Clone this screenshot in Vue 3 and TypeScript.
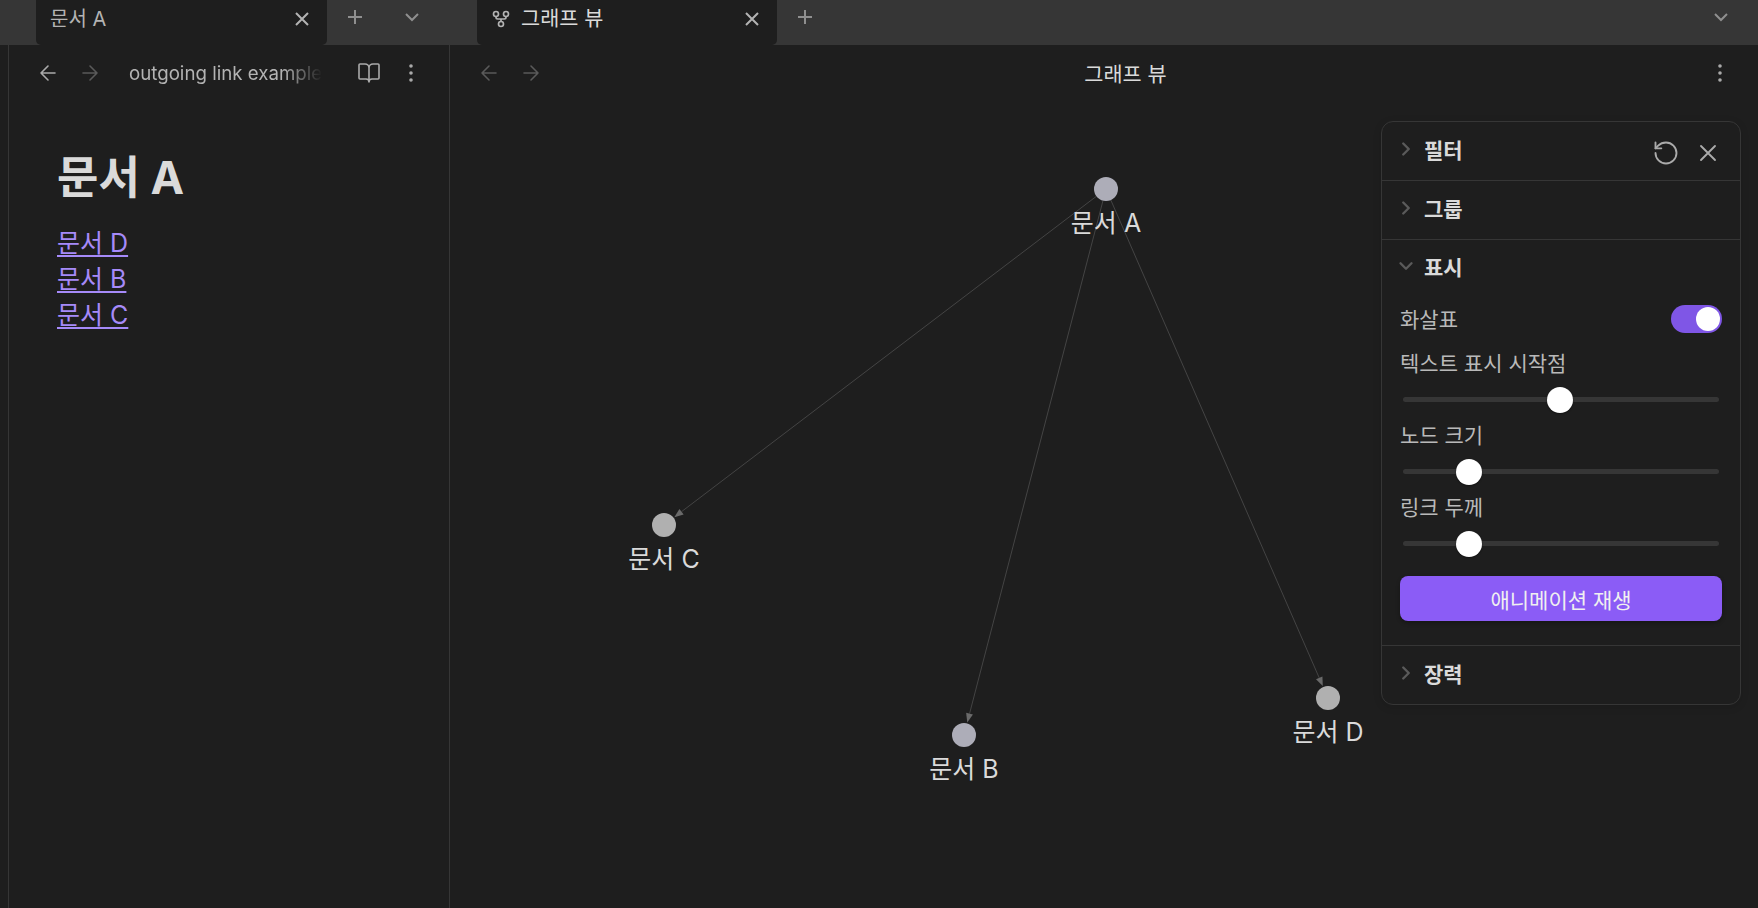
<script setup lang="ts">
interface GraphNode {
  name: string;
  x: number;
  y: number;
  fill: string;
}

// graph canvas coordinates, relative to the right pane body
const originX = 450;
const originY = 45;

const nodes: GraphNode[] = [
  { name: "문서 A", x: 1106 - originX, y: 189 - originY, fill: "#adadb8" },
  { name: "문서 C", x: 664 - originX, y: 525 - originY, fill: "#b0b0b0" },
  { name: "문서 B", x: 964 - originX, y: 735 - originY, fill: "#adadb8" },
  { name: "문서 D", x: 1328 - originX, y: 698 - originY, fill: "#b0b0b0" },
];

function edgeLine(to: GraphNode) {
  const from = nodes[0];
  const dx = to.x - from.x;
  const dy = to.y - from.y;
  const len = Math.hypot(dx, dy);
  const ux = dx / len;
  const uy = dy / len;
  const endX = to.x - ux * 13;
  const endY = to.y - uy * 13;
  const backX = endX - ux * 9;
  const backY = endY - uy * 9;
  const nx = -uy * 3.5;
  const ny = ux * 3.5;
  return {
    x1: from.x + ux * 12,
    y1: from.y + uy * 12,
    x2: backX,
    y2: backY,
    head: `${endX},${endY} ${backX + nx},${backY + ny} ${backX - nx},${backY - ny}`,
  };
}

const edges = nodes.slice(1).map(edgeLine);

const sliders = [
  { label: "텍스트 표시 시작점", value: 144 },
  { label: "노드 크기", value: 53 },
  { label: "링크 두께", value: 53 },
];
</script>

<template>
  <div class="app">
    <section class="split left">
      <div class="tabbar">
        <div class="tab first">
          <span class="tab-title">문서 A</span>
          <svg class="tab-close" viewBox="0 0 24 24"><path d="M18 6 6 18M6 6l12 12" /></svg>
        </div>
        <svg class="bar-icon plus" viewBox="0 0 24 24"><path d="M5 12h14M12 5v14" /></svg>
        <svg class="bar-icon chev" viewBox="0 0 24 24"><path d="m6 9 6 6 6-6" /></svg>
      </div>
      <div class="left-body">
        <div class="view-header">
          <svg class="nav" viewBox="0 0 24 24"><path d="m12 19-7-7 7-7M19 12H5" /></svg>
          <svg class="nav dim" viewBox="0 0 24 24"><path d="M5 12h14M12 5l7 7-7 7" /></svg>
          <span class="note-path">outgoing link example</span>
          <svg class="nav book" viewBox="0 0 24 24"><path d="M12 7v14M3 18a1 1 0 0 1-1-1V4a1 1 0 0 1 1-1h5a4 4 0 0 1 4 4 4 4 0 0 1 4-4h5a1 1 0 0 1 1 1v13a1 1 0 0 1-1 1h-6a3 3 0 0 0-3 3 3 3 0 0 0-3-3z" /></svg>
          <svg class="nav dots" viewBox="0 0 24 24"><circle cx="12" cy="5" r="1" /><circle cx="12" cy="12" r="1" /><circle cx="12" cy="19" r="1" /></svg>
        </div>
        <article class="note">
          <h1>문서 A</h1>
          <a>문서 D</a>
          <a>문서 B</a>
          <a>문서 C</a>
        </article>
      </div>
    </section>

    <section class="split right">
      <div class="tabbar">
        <div class="tab second">
          <svg class="tab-icon" viewBox="0 0 24 24"><circle cx="12" cy="18" r="3" /><circle cx="6" cy="6" r="3" /><circle cx="18" cy="6" r="3" /><path d="M18 9v1a2 2 0 0 1-2 2H8a2 2 0 0 1-2-2V9M12 12v3" /></svg>
          <span class="tab-title bright">그래프 뷰</span>
          <svg class="tab-close" viewBox="0 0 24 24"><path d="M18 6 6 18M6 6l12 12" /></svg>
        </div>
        <svg class="bar-icon plus" viewBox="0 0 24 24"><path d="M5 12h14M12 5v14" /></svg>
        <svg class="bar-icon chev end" viewBox="0 0 24 24"><path d="m6 9 6 6 6-6" /></svg>
      </div>
      <div class="view-header graph-header">
        <svg class="nav dim" viewBox="0 0 24 24"><path d="m12 19-7-7 7-7M19 12H5" /></svg>
        <svg class="nav dim" viewBox="0 0 24 24"><path d="M5 12h14M12 5l7 7-7 7" /></svg>
        <span class="view-title">그래프 뷰</span>
        <svg class="nav dots" viewBox="0 0 24 24"><circle cx="12" cy="5" r="1" /><circle cx="12" cy="12" r="1" /><circle cx="12" cy="19" r="1" /></svg>
      </div>

      <svg class="graph" width="1308" height="863">
        <g v-for="(e, i) in edges" :key="i">
          <line :x1="e.x1" :y1="e.y1" :x2="e.x2" :y2="e.y2" class="edge" />
          <polygon :points="e.head" class="arrow" />
        </g>
        <g v-for="n in nodes" :key="n.name">
          <circle :cx="n.x" :cy="n.y" r="12" :fill="n.fill" />
          <text :x="n.x" :y="n.y + 43" class="node-label">{{ n.name }}</text>
        </g>
      </svg>

      <aside class="controls">
        <div class="ctl-actions">
          <svg viewBox="0 0 24 24"><path d="M3 12a9 9 0 1 0 9-9 9.75 9.75 0 0 0-6.74 2.74L3 8" /><path d="M3 3v5h5" /></svg>
          <svg viewBox="0 0 24 24"><path d="M18 6 6 18M6 6l12 12" /></svg>
        </div>
        <div class="group">
          <svg class="caret" viewBox="0 0 24 24"><path d="m9 18 6-6-6-6" /></svg>
          <span>필터</span>
        </div>
        <div class="group">
          <svg class="caret" viewBox="0 0 24 24"><path d="m9 18 6-6-6-6" /></svg>
          <span>그룹</span>
        </div>
        <div class="group-open">
          <div class="group open-head">
            <svg class="caret" viewBox="0 0 24 24"><path d="m6 9 6 6 6-6" /></svg>
            <span>표시</span>
          </div>
          <div class="toggle-row">
            <span>화살표</span>
            <div class="toggle"><i></i></div>
          </div>
          <div v-for="s in sliders" :key="s.label" class="slider-row">
            <span>{{ s.label }}</span>
            <div class="track">
              <i class="thumb" :style="{ left: s.value + 'px' }"></i>
            </div>
          </div>
          <button class="play">애니메이션 재생</button>
        </div>
        <div class="group last">
          <svg class="caret" viewBox="0 0 24 24"><path d="m9 18 6-6-6-6" /></svg>
          <span>장력</span>
        </div>
      </aside>
    </section>
  </div>
</template>

<style scoped>
.app {
  display: flex;
  width: 1758px;
  height: 908px;
  overflow: hidden;
  background: #1e1e1e;
  color: #dadada;
  font-family: Inter, "Noto Sans CJK KR", sans-serif;
}

.split {
  display: flex;
  flex-direction: column;
  height: 100%;
}

.left {
  width: 450px;
  flex: none;
}

.right {
  flex: 1;
  position: relative;
}

.tabbar {
  display: flex;
  flex: none;
  height: 45px;
  background: #363636;
}

.tab {
  display: flex;
  align-items: center;
  height: 45px;
  box-sizing: border-box;
  background: #1e1e1e;
  border-radius: 0 0 5px 5px;
  padding-bottom: 7px;
}

.tab.first {
  width: 291px;
  margin-left: 36px;
  padding-left: 14px;
  padding-right: 13px;
}

.tab.second {
  width: 300px;
  margin-left: 27px;
  padding-left: 14px;
  padding-right: 13px;
}

.tab-title {
  flex: 1;
  font-size: 20px;
  line-height: 24px;
  color: #b3b3b3;
}

.tab-title.bright {
  font-size: 20.8px;
  color: #dadada;
  margin-left: 10px;
}

.tab-close {
  width: 24px;
  height: 24px;
  fill: none;
  stroke: #b3b3b3;
  stroke-width: 2;
}

.tab-icon {
  width: 20px;
  height: 20px;
  fill: none;
  stroke: #b3b3b3;
  stroke-width: 2;
}

.bar-icon {
  width: 24px;
  height: 24px;
  margin-top: 5px;
  fill: none;
  stroke: #8f8f8f;
  stroke-width: 2;
}

.bar-icon.plus {
  margin-left: 16px;
}

.bar-icon.chev {
  margin-left: 33px;
}

.bar-icon.chev.end {
  margin-left: auto;
  margin-right: 25px;
}

.left-body {
  flex: 1;
  margin-left: 8px;
  border-left: 1px solid #363636;
  border-right: 1px solid #363636;
}

.view-header {
  display: flex;
  align-items: center;
  height: 56px;
  box-sizing: border-box;
}

.left-body .view-header {
  padding-left: 27px;
  padding-right: 26px;
}

.graph-header {
  flex: none;
  padding-left: 27px;
  padding-right: 26px;
  position: relative;
}

.nav {
  width: 24px;
  height: 24px;
  flex: none;
  fill: none;
  stroke: #ababab;
  stroke-width: 1.6;
  stroke-linecap: round;
  stroke-linejoin: round;
  margin-right: 18px;
}

.nav.dim {
  stroke: #5a5a5a;
}

.nav.book {
  margin-left: auto;
  margin-right: 18px;
}

.nav.dots {
  margin-right: 0;
  fill: #ababab;
}

.graph-header .nav.dots {
  margin-left: auto;
}

.note-path {
  margin-left: 9px;
  width: 193px;
  white-space: nowrap;
  overflow: hidden;
  font-size: 18.7px;
  color: #b3b3b3;
  -webkit-mask-image: linear-gradient(to right, #000 80%, transparent 100%);
  mask-image: linear-gradient(to right, #000 80%, transparent 100%);
}

.view-title {
  flex: 1;
  text-align: center;
  font-size: 20.8px;
  color: #dadada;
  margin-right: 18px;
}

.note {
  display: flex;
  flex-direction: column;
  align-items: flex-start;
  padding: 50px 0 0 48px;
}

.note h1 {
  margin: 0 0 20px;
  font-size: 45px;
  line-height: 54px;
  font-weight: 700;
  color: #dadada;
}

.note a {
  font-size: 25px;
  line-height: 36px;
  color: #a68af9;
  text-decoration: underline;
  text-underline-offset: 3px;
}

.graph {
  flex: 1;
  position: absolute;
  left: 0;
  top: 45px;
}

.edge {
  stroke: #444444;
  stroke-width: 1;
}

.arrow {
  fill: #6a6a6a;
}

.node-label {
  font-size: 25px;
  fill: #dadada;
  text-anchor: middle;
  font-family: Inter, "Noto Sans CJK KR", sans-serif;
}

.controls {
  position: absolute;
  top: 121px;
  right: 17px;
  width: 360px;
  height: 584px;
  box-sizing: border-box;
  background: #1e1e1e;
  border: 1px solid #363636;
  border-radius: 12px;
  box-shadow: 0 2px 8px rgba(0, 0, 0, 0.12);
}

.ctl-actions {
  position: absolute;
  top: 17px;
  right: 18px;
  display: flex;
  gap: 14px;
  align-items: center;
}

.ctl-actions svg {
  width: 28px;
  height: 28px;
  fill: none;
  stroke: #ababab;
  stroke-width: 1.6;
  stroke-linecap: round;
  stroke-linejoin: round;
}

.group {
  display: flex;
  align-items: center;
  height: 59px;
  box-sizing: border-box;
  padding: 0 0 5px 13px;
  border-bottom: 1px solid #363636;
  font-size: 21px;
  font-weight: 700;
  color: #dadada;
}

.group span {
  margin-left: 7px;
}

.group.last,
.group.open-head {
  border-bottom: none;
}

.group.last {
  height: 58px;
}

.caret {
  width: 22px;
  height: 22px;
  fill: none;
  stroke: #5a5a5a;
  stroke-width: 2.6;
  stroke-linecap: round;
  stroke-linejoin: round;
}

.group-open {
  height: 406px;
  box-sizing: border-box;
  border-bottom: 1px solid #363636;
}

.open-head {
  height: 56px;
}

.toggle-row {
  display: flex;
  align-items: center;
  justify-content: space-between;
  height: 28px;
  margin: 9px 18px 0;
  font-size: 21px;
  color: #b9b9b9;
}

.toggle-row span {
  margin-bottom: 2px;
}

.toggle {
  position: relative;
  width: 51px;
  height: 28px;
  border-radius: 14px;
  background: #7f56e6;
}

.toggle i {
  position: absolute;
  right: 2px;
  top: 2px;
  width: 24px;
  height: 24px;
  border-radius: 50%;
  background: #fff;
}

.slider-row {
  display: flex;
  flex-direction: column;
  margin: 0 18px;
  font-size: 21px;
  line-height: 24px;
  color: #b9b9b9;
  height: 72px;
  padding-top: 19px;
  box-sizing: border-box;
}

.track {
  position: relative;
  flex: none;
  height: 5px;
  margin: 21px 3px 0;
  border-radius: 3px;
  background: #363636;
}

.thumb {
  position: absolute;
  top: -10.5px;
  width: 26px;
  height: 26px;
  border-radius: 50%;
  background: #fff;
  box-shadow: 0 1px 2px rgba(0, 0, 0, 0.4);
}

.play {
  display: block;
  width: 322px;
  height: 45px;
  margin: 27px 18px 0;
  border: none;
  border-radius: 8px;
  background: #8b5cf6;
  color: #f0f0f0;
  font: 21px Inter, "Noto Sans CJK KR", sans-serif;
  box-shadow: 0 2px 4px rgba(0, 0, 0, 0.3);
}
</style>
